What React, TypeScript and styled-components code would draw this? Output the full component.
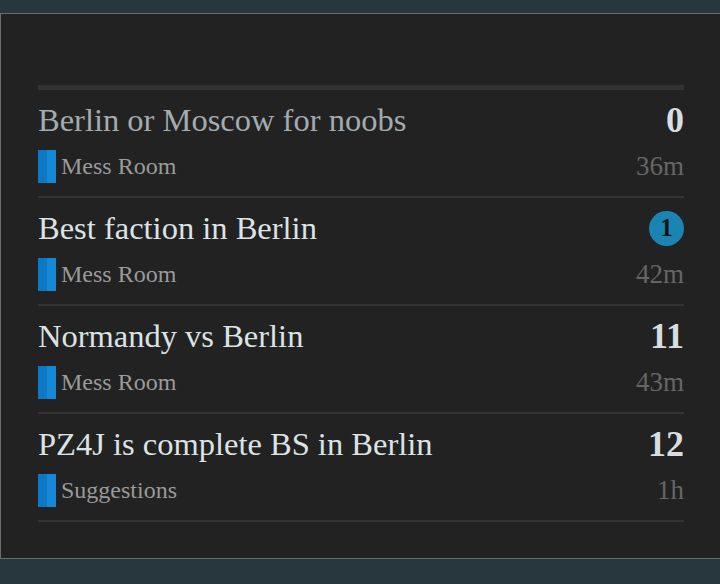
import { createGlobalStyle, styled } from 'styled-components';

const GlobalStyle = createGlobalStyle`
    html, body {
        margin: 0;
        padding: 0;
        background: #28363e;
    }
    body {
        font-family: "Liberation Serif", "DejaVu Serif", serif;
    }
`;

const Page = styled.div`
    height: 584px;
    padding-top: 13px;
    box-sizing: border-box;
    overflow: hidden;
`;

const Panel = styled.div`
    height: 546px;
    box-sizing: border-box;
    background: #222222;
    border: 1px solid #6b6e6a;
    border-right: none;
    padding: 71px 36px 0 37px;
`;

const TopRule = styled.div`
    height: 5px;
    background: #333333;
`;

const Row = styled.div`
    height: 108px;
    box-sizing: border-box;
    border-bottom: 2px solid #333333;
    display: flex;
    flex-direction: column;
    padding-top: 8px;
`;

const Line = styled.div`
    display: flex;
    align-items: center;
    justify-content: space-between;
`;

const Title = styled.div<{ $read?: boolean }>`
    font-size: 32.5px;
    line-height: 44px;
    color: ${(p) => (p.$read ? '#a3abb0' : '#dde2e5')};
`;

const Count = styled.div`
    font-size: 36px;
    font-weight: 700;
    line-height: 44px;
    color: #d8dde0;
`;

const Badge = styled.div`
    width: 35px;
    height: 35px;
    border-radius: 50%;
    background: #1a85b3;
    color: #151515;
    font-size: 25px;
    font-weight: 700;
    display: flex;
    align-items: center;
    justify-content: center;
`;

const Meta = styled(Line)`
    margin-top: 8px;
`;

const Category = styled.div`
    display: flex;
    align-items: center;
    gap: 5px;
    font-size: 24px;
    color: #9a9a9a;
`;

const Swatch = styled.span`
    width: 18px;
    height: 33px;
    background: linear-gradient(90deg, #0c78c8 0 50%, #1689d6 50% 100%);
`;

const Age = styled.div`
    font-size: 27px;
    color: #666666;
`;

type Topic = {
    title: string;
    category: string;
    age: string;
    count?: number;
    unread?: number;
    read?: boolean;
};

const topics: Topic[] = [
    { title: 'Berlin or Moscow for noobs', category: 'Mess Room', age: '36m', count: 0, read: true },
    { title: 'Best faction in Berlin', category: 'Mess Room', age: '42m', unread: 1 },
    { title: 'Normandy vs Berlin', category: 'Mess Room', age: '43m', count: 11 },
    { title: 'PZ4J is complete BS in Berlin', category: 'Suggestions', age: '1h', count: 12 },
];

export default function App() {
    return (
        <>
            <GlobalStyle />
            <Page>
                <Panel>
                    <TopRule />
                    {topics.map((t) => (
                        <Row key={t.title}>
                            <Line>
                                <Title $read={t.read}>{t.title}</Title>
                                {t.unread ? <Badge>{t.unread}</Badge> : <Count>{t.count}</Count>}
                            </Line>
                            <Meta>
                                <Category>
                                    <Swatch />
                                    {t.category}
                                </Category>
                                <Age>{t.age}</Age>
                            </Meta>
                        </Row>
                    ))}
                </Panel>
            </Page>
        </>
    );
}
